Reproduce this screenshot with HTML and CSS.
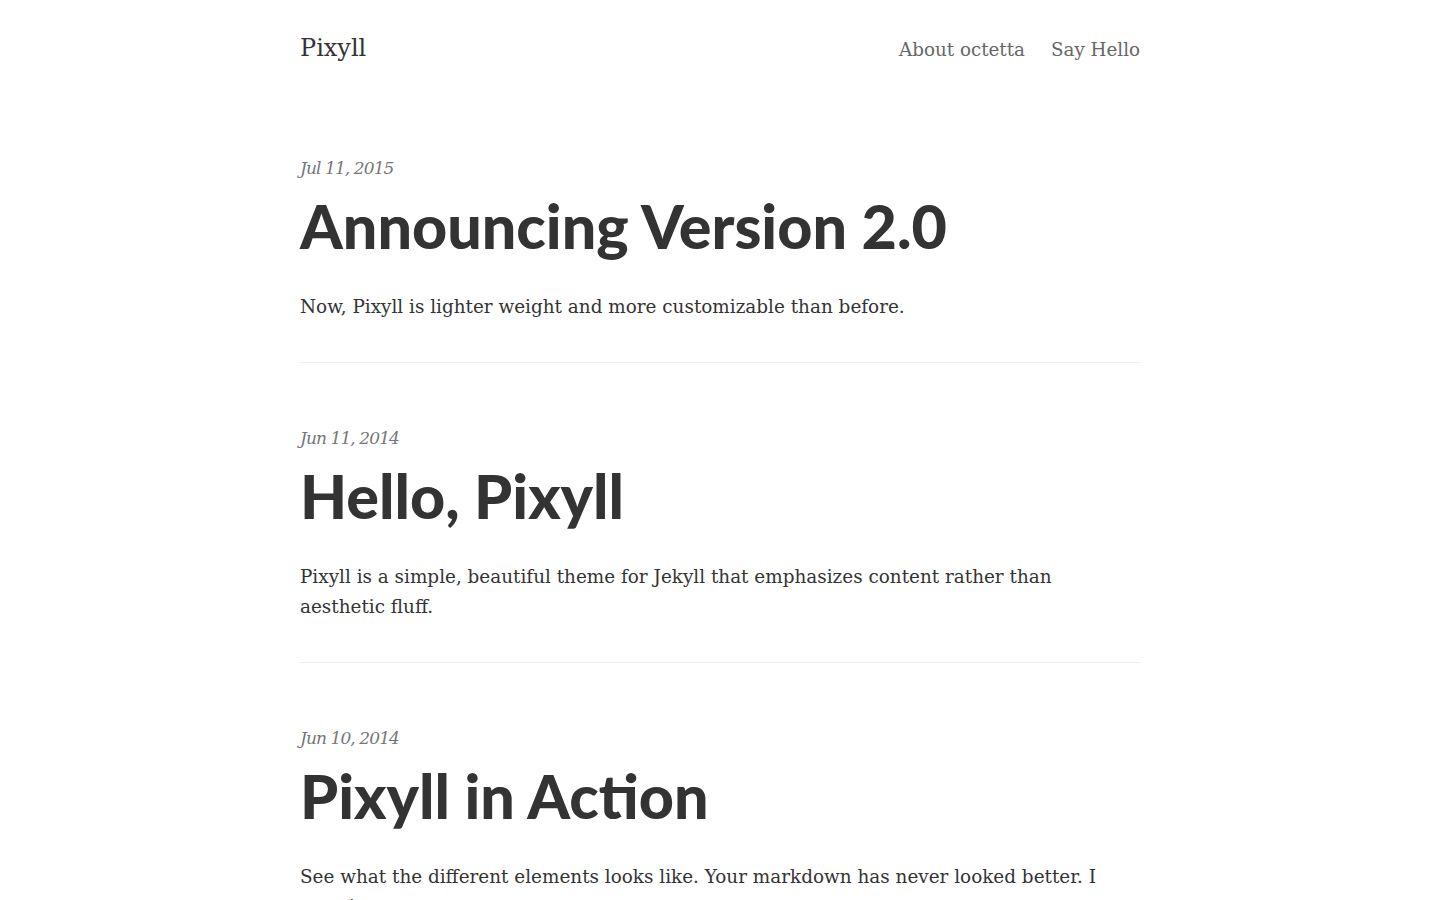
FILE: index.html
```html
<!DOCTYPE html>
<html lang="en">
<head>
<meta charset="utf-8">
<title>Pixyll</title>
<link rel="stylesheet" href="styles.css">
</head>
<body>
<header class="site-header">
  <div class="container header-row">
    <a class="site-title" href="#">Pixyll</a>
    <nav class="site-nav">
      <a href="#">About octetta</a>
      <a href="#">Say Hello</a>
    </nav>
  </div>
</header>
<main class="container posts">
  <article class="post">
    <div class="post-meta">Jul 11, 2015</div>
    <h1 class="post-title">Announcing Version 2.0</h1>
    <p class="post-summary">Now, Pixyll is lighter weight and more customizable than before.</p>
  </article>
  <article class="post">
    <div class="post-meta">Jun 11, 2014</div>
    <h1 class="post-title">Hello, Pixyll</h1>
    <p class="post-summary">Pixyll is a simple, beautiful theme for Jekyll that emphasizes content rather than aesthetic fluff.</p>
  </article>
  <article class="post">
    <div class="post-meta">Jun 10, 2014</div>
    <h1 class="post-title">Pixyll in Action</h1>
    <p class="post-summary">See what the different elements looks like. Your markdown has never looked better. I promise.</p>
  </article>
</main>
</body>
</html>
```
FILE: styles.css
```css
html, body {
  margin: 0;
  padding: 0;
  background: #fff;
}
body {
  font-family: "DejaVu Serif", "Liberation Serif", serif;
  color: #333;
}
a {
  text-decoration: none;
  color: inherit;
}
.container {
  width: 840px;
  margin: 0 auto;
}
.site-header {
  padding-top: 32px;
}
.header-row {
  display: flex;
  justify-content: space-between;
  align-items: center;
  height: 32px;
}
.site-title {
  font-size: 24px;
  color: #333;
  font-weight: 300;
}
.site-nav {
  display: flex;
  gap: 26px;
  padding-top: 2px;
}
.site-nav a {
  font-size: 18.3px;
  color: #666;
}
.posts {
  padding-top: 89px;
}
.post {
  border-bottom: 1px solid #eee;
  padding-bottom: 40px;
  margin-bottom: 60px;
}
.post-meta {
  font-style: italic;
  color: #777;
  font-size: 17px;
  letter-spacing: -0.9px;
  line-height: 30px;
}
.post-title {
  font-family: Lato, "Liberation Sans", sans-serif;
  font-weight: 900;
  font-size: 61px;
  line-height: 74px;
  margin: 6px 0 29px;
  color: #333;
}
.post-summary {
  font-size: 18.4px;
  line-height: 30px;
  margin: 0;
  color: #333;
}
```
